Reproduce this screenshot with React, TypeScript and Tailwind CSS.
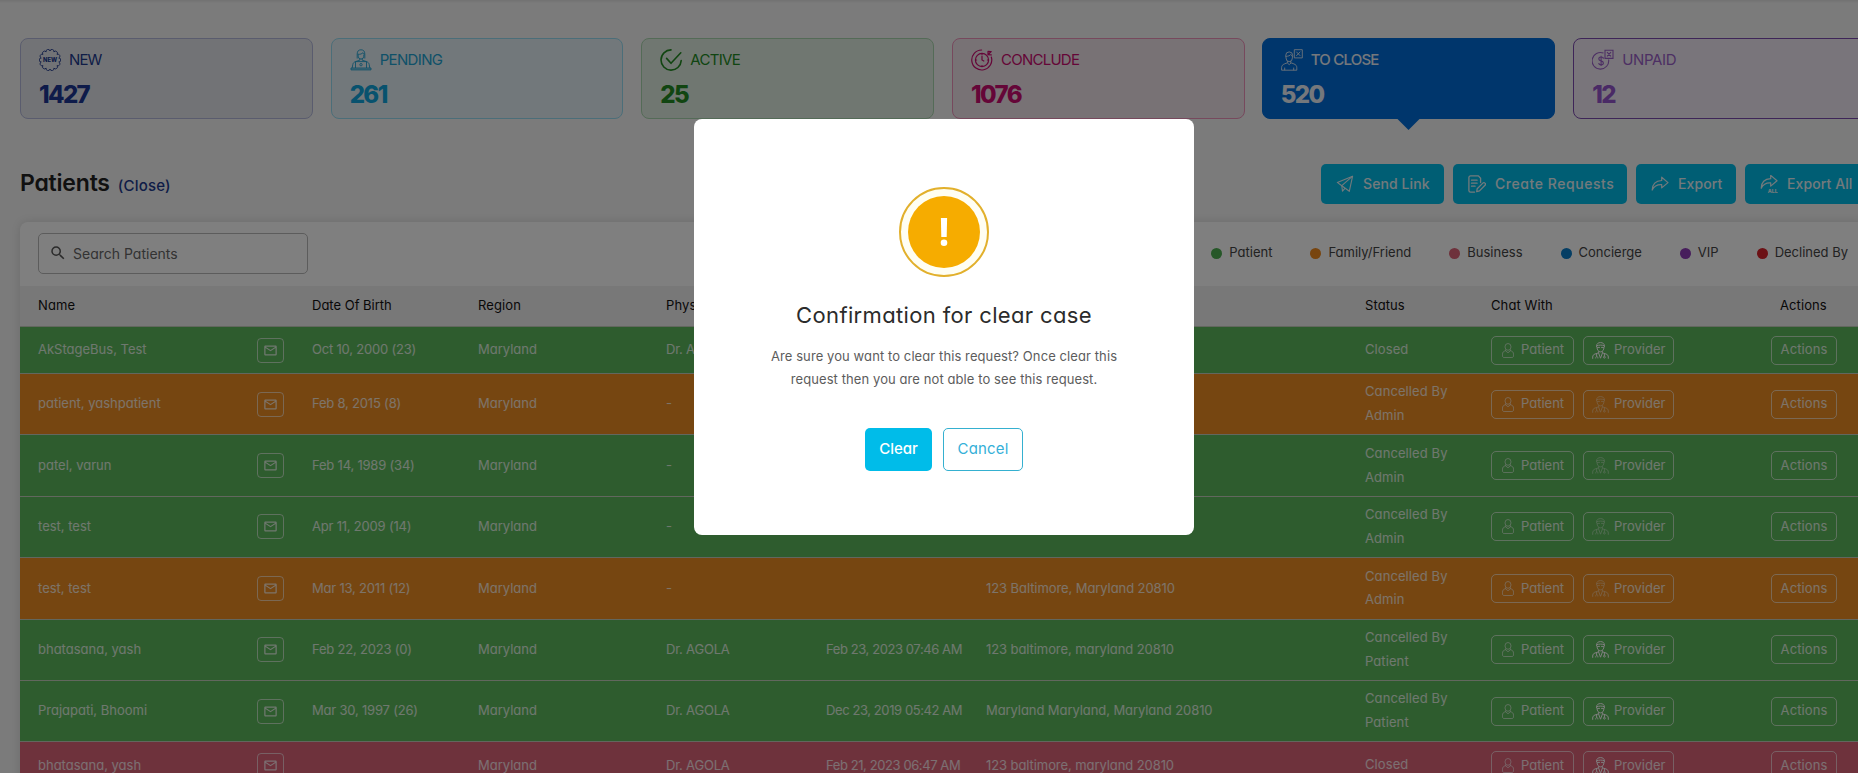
import React from 'react';
import { MdOutlineMailOutline, MdSearch } from 'react-icons/md';

type IconProps = { className?: string };

const scallop = (() => {
  const n = 14;
  let d = '';
  for (let i = 0; i <= n; i++) {
    const a = (i / n) * Math.PI * 2 - Math.PI / 2;
    const x = (11 + 9 * Math.cos(a)).toFixed(2);
    const y = (11 + 9 * Math.sin(a)).toFixed(2);
    d += i === 0 ? `M${x} ${y}` : `A2 2 0 0 1 ${x} ${y}`;
  }
  return d + 'Z';
})();

const NewIcon = ({ className }: IconProps) => (
  <svg viewBox="0 0 22 22" className={className} fill="none" stroke="currentColor" strokeWidth="0.9">
    <path d={scallop} />
    <text x="11" y="13.1" fontSize="5.800" fontWeight="800" textAnchor="middle" fill="currentColor" stroke="none" fontFamily="Inter, sans-serif">
      NEW
    </text>
  </svg>
);

const LaptopUserIcon = ({ className }: IconProps) => (
  <svg viewBox="0 0 22 22" className={className} fill="none" stroke="currentColor" strokeWidth="0.9">
    <path d="M7.2 9.5V5a3.8 4.2 0 0 1 7.6 0v4.5" />
    <path d="M7.6 5.2c2.6.4 4.6-.4 5.4-1.6.4 1 1 1.5 1.6 1.6" />
    <path d="M8.2 5.5v1.7a2.8 2.9 0 0 0 5.600 0V5.500" />
    <path d="M9.8 9.6v1.6M12.2 9.6v1.6M9.8 11.2 5.5 12.6c-1.5.5-2.4 1.4-2.7 2.9L2.2 19M12.2 11.2l4.3 1.4c1.5.5 2.4 1.4 2.7 2.9l.6 3.5" />
    <path d="M5.500 19v-6.400h11V19" />
    <circle cx="11" cy="15.700" r="1.200" />
    <path d="M1 19h20v1.900H1z" fill="currentColor" fillOpacity="0.4" />
  </svg>
);

const CheckIcon = ({ className }: IconProps) => (
  <svg viewBox="0 0 22 22" className={className} fill="none" stroke="currentColor" strokeWidth="1.600" strokeLinecap="round" strokeLinejoin="round">
    <path d="M11 .9a10.100 10.100 0 1 0 10.200 10.700" />
    <path d="m6.600 9.400 4.400 4.900L20.800 3.800" />
  </svg>
);

const TimerIcon = ({ className }: IconProps) => (
  <svg viewBox="0 0 22 22" className={className} fill="none" stroke="currentColor" strokeWidth="1.200" strokeLinecap="round">
    <path d="M10.600 1A10 10 0 1 0 20.300 8" />
    <circle cx="11" cy="11" r="6.600" />
    <path d="M11 7.200V11l1.800 1M11 4.600v1M11 16.500v1M4.600 11h1M16.400 11h1M17 2.400v3.200l3.300.3M17 2.400l2.900.2M17.400 5.400l2.800-2.800" />
  </svg>
);

const PersonCrossIcon = ({ className }: IconProps) => (
  <svg viewBox="0 0 22 22" className={className} fill="none" stroke="currentColor" strokeOpacity="0.85" strokeWidth="1">
    <path d="M4.700 7.500V6.600a3.500 3.700 0 0 1 7 0v.9" />
    <path d="M4.700 7.300c2.400 0 4.200-.6 5-1.800.5 1 1.200 1.600 2 1.800" />
    <path d="M5 7.300v1.600a3.200 3.700 0 0 0 6.400 0V7.300" />
    <path d="M6.700 12v1.700L3.500 14.900C1.500 15.600.6 16.900.6 18.700v2.500h15.200v-2.500c0-1.800-.9-3.100-2.900-3.800l-3.200-1.200V12M6.400 14l1.800 1.600L10 14M3.700 18.600v2.600M12.700 18.600v2.600" />
    <path d="M13.300.7h8v8.200h-8zM15.300 2.700l4 4.200M19.300 2.700l-4 4.200" />
  </svg>
);

const UnpaidIcon = ({ className }: IconProps) => (
  <svg viewBox="0 0 22 22" className={className} fill="none" stroke="currentColor" strokeWidth="1.100">
    <path d="M11.500 4.100A8.300 8.300 0 1 0 16.600 10.500" />
    <path d="M11.400 9.700c0-1.100-.9-1.700-2.300-1.700s-2.300.7-2.300 1.900c0 2.600 4.600 1.400 4.600 4 0 1.200-.9 1.900-2.300 1.900s-2.300-.7-2.300-1.800M9.100 6.700V17" />
    <path d="M13 1.200h8v8.200h-8zM15 3.200l4 4.200M19 3.200l-4 4.200" />
  </svg>
);

const SendIcon = ({ className }: IconProps) => (
  <svg viewBox="0 0 18 18" className={className} fill="none" stroke="currentColor" strokeWidth="1.100" strokeLinejoin="round">
    <path d="M16.600 1.200 1.300 7.400l4.500 3.300 7.500 5.600z" />
    <path d="M16.600 1.200 5.800 10.700l.7 5.500 2.600-3" />
  </svg>
);

const RequestIcon = ({ className }: IconProps) => (
  <svg viewBox="0 0 18 18" className={className} fill="none" stroke="currentColor" strokeWidth="1.300" strokeLinejoin="round" strokeLinecap="round">
    <path d="M12.600 7.500V3.200L10.400.9H2.600C1.600.9.9 1.600.9 2.600v12.800c0 1 .7 1.700 1.700 1.700h4" />
    <path d="M3.500 5.200h5.600M3.500 8.200h5.600M3.500 11.200h3.600" />
    <path d="m8.700 16.700.5-3 5.600-5.600c.7-.7 1.600-.7 2.200 0 .6.600.6 1.500 0 2.200l-5.500 5.600z" />
  </svg>
);

const sharePath = 'M10.700 2.200 17 7.600l-6.300 5.300V9.700C6 9.400 3.200 11 1.200 15.100c.2-6 3.300-9.400 9.500-9.600z';

const ExportIcon = ({ className }: IconProps) => (
  <svg viewBox="0 0 18 18" className={className} fill="none" stroke="currentColor" strokeWidth="1.200" strokeLinejoin="round">
    <path d={sharePath} />
  </svg>
);

const ExportAllIcon = ({ className }: IconProps) => (
  <svg viewBox="0 0 18 18" className={className} fill="none" stroke="currentColor" strokeWidth="1.200" strokeLinejoin="round">
    <path d={sharePath} transform="translate(0 -1.8)" />
    <text x="12.800" y="17.800" fontSize="5.200" fontWeight="800" textAnchor="middle" fill="currentColor" stroke="none" fontFamily="Inter, sans-serif">
      ALL
    </text>
  </svg>
);

const PatientIcon = ({ className }: IconProps) => (
  <svg viewBox="0 0 12 15" className={className} fill="none" stroke="currentColor" strokeWidth="0.900">
    <ellipse cx="6" cy="3.900" rx="3" ry="3.400" />
    <path d="M3.600 6.600v1.300L6 9.700l2.400-1.800V6.600M3.600 7.700C1.300 8.300.5 9.300.5 11.200v1.700c0 1 .6 1.600 1.600 1.600h7.800c1 0 1.600-.6 1.600-1.600v-1.700c0-1.900-.8-2.900-3.100-3.500" />
  </svg>
);

const ProviderIcon = ({ className }: IconProps) => (
  <svg viewBox="0 0 17 17" className={className} fill="none" stroke="currentColor" strokeWidth="1">
    <path d="M4.600 5V3.900C4.600 1.700 6.200.6 8.500.6s3.900 1.100 3.900 3.300V5M4.600 3.700c2.600-.8 5.200-.8 7.800 0M5.200 5.400h2.700M9.100 5.400h2.700M5 5c0 3 1.400 4.900 3.500 4.900S12 8 12 5" />
    <path d="M6.600 9.400v1.400L3 12c-1.500.5-2.300 1.500-2.300 3v1.800M10.400 9.400v1.400L14 12c1.500.5 2.300 1.500 2.300 3v1.800M6.500 10.800l2 5.400 2-5.400M4.600 11.600v2.800M12.400 11.600v2.600M3.700 16.400c0-1.300.4-1.900 1.100-1.900s1.100.6 1.100 1.900" />
    <circle cx="12.400" cy="15.200" r="0.900" />
  </svg>
);

const cards = [
  { label: 'NEW', count: '1427', Icon: NewIcon, box: 'border-[#b4b9dc] bg-[#e5e7ec]', text: 'text-[#203a8f]', num: 'text-[#1d3794]', ls: 'tracking-[-0.9px]' },
  { label: 'PENDING', count: '261', Icon: LaptopUserIcon, box: 'border-[#97dcf2] bg-[#e4f1f6]', text: 'text-[#20a2d2]', num: 'text-[#10a4dc]', ls: 'tracking-[-0.65px]' },
  { label: 'ACTIVE', count: '25', Icon: CheckIcon, box: 'border-[#a9d6ae] bg-[#e1eee2]', text: 'text-[#228b22]', num: 'text-[#228b22]', ls: 'tracking-[-0.7px]' },
  { label: 'CONCLUDE', count: '1076', Icon: TimerIcon, box: 'border-[#ee92ba] bg-[#f1e4eb]', text: 'text-[#cb0c70]', num: 'text-[#cb0c70]', ls: 'tracking-[-0.75px]' },
  { label: 'TO CLOSE', count: '520', Icon: PersonCrossIcon, box: '-ml-px border-[#006cd8] bg-[#006cd8]', text: 'font-medium text-[#eaf1f8]', num: 'text-[#eaf1f8]', ls: 'tracking-[-0.77px]', active: true },
  { label: 'UNPAID', count: '12', Icon: UnpaidIcon, box: 'border-[#7c4bb0] bg-[#f3ebf6]', text: 'text-[#9a5fc8]', num: 'text-[#9454cc]', ls: 'tracking-[-0.4px]' },
];

const buttons = [
  { label: 'Send Link', Icon: SendIcon, w: 'w-[123px]', ls: 'tracking-[0.1px]' },
  { label: 'Create Requests', Icon: RequestIcon, w: 'w-[174px]', ls: 'tracking-[0.56px]' },
  { label: 'Export', Icon: ExportIcon, w: 'w-[100px]', ls: 'tracking-[0.12px]' },
  { label: 'Export All', Icon: ExportAllIcon, w: 'w-[121px]', ls: 'tracking-[0.1px]' },
];

const legend = [
  { label: 'Patient', dot: 'bg-[#4caf50]' },
  { label: 'Family/Friend', dot: 'bg-[#f08a1e]' },
  { label: 'Business', dot: 'bg-[#dd6478]' },
  { label: 'Concierge', dot: 'bg-[#0a7cc8]' },
  { label: 'VIP', dot: 'bg-[#8e3cb8]' },
  { label: 'Declined By', dot: 'bg-[#d8232a]' },
];

const G = 'bg-[#5cb85c]';
const O = 'bg-[#ec8c22]';
const P = 'bg-[#dc6479]';
const SHORT = 'h-[47px]';
const TALL = 'h-[61.4px]';

const rows = [
  { name: 'AkStageBus, Test', dob: 'Oct 10, 2000 (23)', phys: 'Dr. AGOLA', date: '', addr: '', status: ['Closed'], color: G, h: SHORT, provider: true },
  { name: 'patient, yashpatient', dob: 'Feb 8, 2015 (8)', phys: '-', date: '', addr: '', status: ['Cancelled By', 'Admin'], color: O, h: TALL, provider: false },
  { name: 'patel, varun', dob: 'Feb 14, 1989 (34)', phys: '-', date: '', addr: '', status: ['Cancelled By', 'Admin'], color: G, h: TALL, provider: false },
  { name: 'test, test', dob: 'Apr 11, 2009 (14)', phys: '-', date: '', addr: '', status: ['Cancelled By', 'Admin'], color: G, h: TALL, provider: false },
  { name: 'test, test', dob: 'Mar 13, 2011 (12)', phys: '-', date: '', addr: '123 Baltimore, Maryland 20810', status: ['Cancelled By', 'Admin'], color: O, h: TALL, provider: false },
  { name: 'bhatasana, yash', dob: 'Feb 22, 2023 (0)', phys: 'Dr. AGOLA', date: 'Feb 23, 2023 07:46 AM', addr: '123 baltimore, maryland 20810', status: ['Cancelled By', 'Patient'], color: G, h: TALL, provider: true },
  { name: 'Prajapati, Bhoomi', dob: 'Mar 30, 1997 (26)', phys: 'Dr. AGOLA', date: 'Dec 23, 2019 05:42 AM', addr: 'Maryland Maryland, Maryland 20810', status: ['Cancelled By', 'Patient'], color: G, h: TALL, provider: true },
  { name: 'bhatasana, yash', dob: '', phys: 'Dr. AGOLA', date: 'Feb 21, 2023 06:47 AM', addr: '123 baltimore, maryland 20810', status: ['Closed'], color: P, h: SHORT, provider: true },
];

const COLS = 'grid grid-cols-[219px_55px_166px_188px_160px_160px_379px_126px_280px_1fr] items-center pl-[18px]';

function StatusCards() {
  return (
    <div className="grid grid-cols-6 gap-[18px]">
      {cards.map(({ label, count, Icon, box, text, num, ls, active }) => (
        <div key={label} className={`relative flex h-[81px] flex-col rounded-lg border pl-[18px] pt-[10px] ${box}`}>
          <div className={`flex items-center gap-2 ${text}`}>
            <Icon className="size-[22px]" />
            <span className={`text-[15px] leading-[22px] ${ls}`}>{label}</span>
          </div>
          <div className={`mt-[11px] text-[24px] leading-[26px] font-extrabold tracking-[-1.6px] ${num}`}>{count}</div>
          {active && <div className="absolute top-full left-1/2 h-3 w-6 -translate-x-1/2 bg-[#006cd8] [clip-path:polygon(0_0,100%_0,50%_100%)]" />}
        </div>
      ))}
    </div>
  );
}

function Toolbar() {
  return (
    <div className="mt-[45px] flex h-10 items-center justify-between">
      <div className="flex items-baseline gap-2 pb-[3px] font-medium">
        <h1 className="text-[23px] leading-8 font-semibold tracking-[-0.2px] text-[#222]">Patients</h1>
        <span className="text-[15px] tracking-[0.2px] text-[#203a8f]">(Close)</span>
      </div>
      <div className="flex gap-[9px]">
        {buttons.map(({ label, Icon, w, ls }) => (
          <button key={label} className={`flex h-10 items-center gap-[9px] rounded-[5px] bg-[#00bce9] pb-0.5 pl-[15px] text-[14px] whitespace-nowrap text-[#e6f4f8] ${w}`}>
            <Icon className="size-[18px] shrink-0 translate-y-px" />
            <span className={`font-medium ${ls}`}>{label}</span>
          </button>
        ))}
      </div>
    </div>
  );
}

function ChatButtons({ provider }: { provider: boolean }) {
  return (
    <div className="flex gap-[9px]">
      <button className="flex h-[29px] w-[83px] items-center rounded-[5px] border border-white/60 pl-[10px]">
        <PatientIcon className="mr-[7px] h-[15px] w-3 opacity-80" />
        Patient
      </button>
      <button className="flex h-[29px] w-[91px] items-center rounded-[5px] border border-white/60 pl-2">
        <ProviderIcon className={`mr-[5px] size-[17px] ${provider ? 'text-white' : 'opacity-50'}`} />
        Provider
      </button>
    </div>
  );
}

function PatientsTable() {
  return (
    <div className="mt-[18px] rounded-t-lg bg-white shadow-[0_0_10px_rgba(0,0,0,0.12)]">
      <div className="flex h-[64px] items-center justify-between px-[18px] pb-0.5">
        <div className="flex h-[41px] w-[270px] items-center rounded-[5px] border border-[#b9b9b9] pl-[10px] text-[14px] text-[#666]">
          <MdSearch className="size-[18px] text-[#555]" />
          <span className="ml-[6px]">Search Patients</span>
        </div>
        <div className="flex gap-[38px] text-[13px] text-[#444]">
          {legend.map(({ label, dot }) => (
            <div key={label} className="flex items-center gap-[7px]">
              <span className={`size-[11px] rounded-full ${dot}`} />
              {label}
            </div>
          ))}
        </div>
      </div>
      <div className={`${COLS} h-10 bg-[#f1f0f1] text-[13px] tracking-[0.1px] text-[#111]`}>
        <span>Name</span>
        <span />
        <span className="tracking-normal">Date Of Birth</span>
        <span>Region</span>
        <span>Physician Name</span>
        <span />
        <span />
        <span>Status</span>
        <span>Chat With</span>
        <span className="pl-[9px]">Actions</span>
      </div>
      {rows.map((r, i) => (
        <div key={i} className={`${COLS} border-t border-[#c4cfbc] text-[13px] text-white/80 ${r.color} ${r.h}`}>
          <span>{r.name}</span>
          <button className="flex h-[25px] w-[27px] items-center justify-center rounded-[4px] border border-white/60">
            <MdOutlineMailOutline className="size-[15px]" />
          </button>
          <span className="tracking-[-0.2px]">{r.dob}</span>
          <span>Maryland</span>
          <span className="tracking-[-0.2px]">{r.phys}</span>
          <span className="tracking-[-0.41px]">{r.date}</span>
          <span className="tracking-[-0.08px]">{r.addr}</span>
          <div className="leading-[23.7px] tracking-[0.09px]">
            {r.status.map((s) => (
              <div key={s}>{s}</div>
            ))}
          </div>
          <ChatButtons provider={r.provider} />
          <button className="h-[29px] w-[66px] rounded-[5px] border border-white/60 tracking-[0.1px]">Actions</button>
        </div>
      ))}
    </div>
  );
}

function ConfirmDialog() {
  return (
    <div className="flex h-[416px] w-[500px] flex-col items-center rounded-lg bg-white pt-[68px]">
      <svg viewBox="0 0 90 90" className="size-[90px]">
        <circle cx="45" cy="45" r="44" fill="#fffef2" stroke="#e2b02c" strokeWidth="2" />
        <circle cx="45" cy="45" r="36" fill="#f6ac00" />
        <path d="M41.9 31h6.200l-.4 19h-5.400z" fill="#fff" />
        <circle cx="45" cy="55.800" r="3.300" fill="#fff" />
      </svg>
      <h2 className="mt-[22px] text-[22px] leading-8 tracking-[0.35px] text-[#2b2b2b]">Confirmation for clear case</h2>
      <p className="mt-[14px] text-center text-[13px] leading-[23.4px] tracking-[0.09px] text-[#5c5c5c]">
        Are sure you want to clear this request? Once clear this
        <br />
        request then you are not able to see this request.
      </p>
      <div className="mt-[36px] flex gap-[11px] text-[15px]">
        <button className="h-[43px] w-[67px] rounded-[5px] bg-[#00bce9] font-medium text-white">Clear</button>
        <button className="h-[43px] w-[80px] rounded-[5px] border border-[#35b0d0] tracking-[0.15px] text-[#35b0d8]">Cancel</button>
      </div>
    </div>
  );
}

export default function App() {
  return (
    <div className="h-[774px] w-full overflow-hidden bg-white">
      <div className="relative h-[773px] w-[1858px] overflow-hidden bg-[#f6f6f6] font-['Inter',sans-serif] whitespace-nowrap [font-feature-settings:'cv11']">
        <div className="h-[3px] w-full bg-linear-to-b from-[#e4e4e4] to-[#f6f6f6]" />
        <div className="w-[1866px] pt-[35px] pl-5">
          <StatusCards />
          <Toolbar />
          <PatientsTable />
        </div>
        <div className="absolute top-0 left-0 flex h-full w-[1888px] items-start justify-center bg-black/50 pt-[119px]">
          <ConfirmDialog />
        </div>
      </div>
    </div>
  );
}
